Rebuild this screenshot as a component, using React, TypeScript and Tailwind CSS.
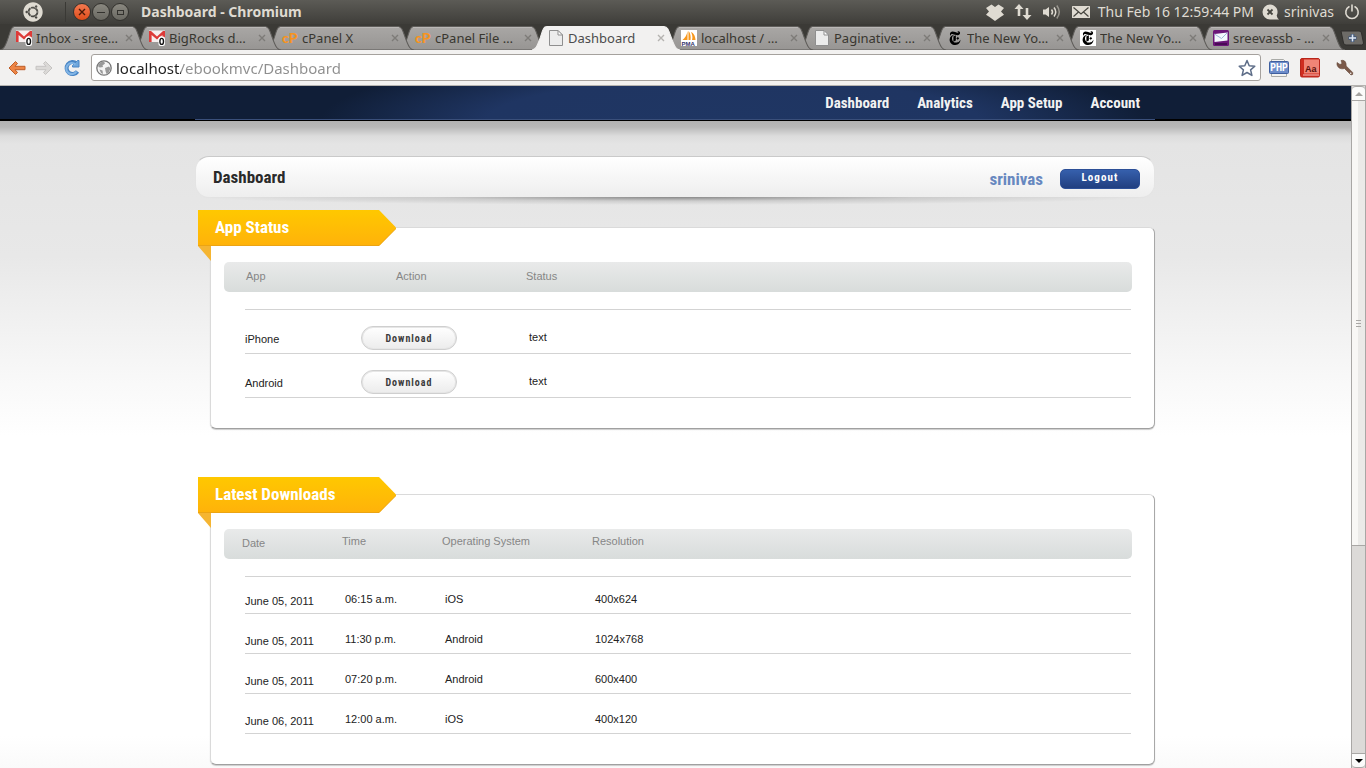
import type { ReactNode } from "react";
import { FaUbuntu } from "react-icons/fa";
import { SiNewyorktimes } from "react-icons/si";

const narrow = "font-['Liberation_Sans_Narrow','Roboto_Condensed','Liberation_Sans',sans-serif]";

function GmailIcon() {
  return (
    <svg viewBox="0 0 16 16" className="h-4 w-4 shrink-0" aria-hidden="true">
      <rect x="0" y="0.5" width="16" height="11.5" fill="#f6eeee" />
      <path d="M0 12V1h2l6 5.6L14 1h2v11h-2.6V5L8 9.6 2.6 5v7z" fill="#dd3a38" />
      <rect x="9.500" y="6.500" width="6.500" height="9.500" rx="2" fill="#fff" />
      <ellipse cx="12.700" cy="11.400" rx="1.800" ry="3" fill="none" stroke="#111" strokeWidth="1.400" />
    </svg>
  );
}

function CpanelIcon() {
  return (
    <span className="w-4 shrink-0 font-['Lato',sans-serif] text-sm leading-4 font-black text-[#f7941e]" aria-hidden="true">
      cP
    </span>
  );
}

function PageIcon() {
  return (
    <svg viewBox="0 0 16 16" className="h-4 w-4 shrink-0" aria-hidden="true">
      <path d="M1.500 0.500h8.500l4.500 4.500v10.500h-13z" fill="#ececec" stroke="#8f8f8f" />
      <path d="M10 0.500v4.500h4.500z" fill="#fff" stroke="#8f8f8f" />
    </svg>
  );
}

function PmaIcon() {
  return (
    <svg viewBox="0 0 16 16" className="h-4 w-4 shrink-0" aria-hidden="true">
      <rect width="16" height="16" fill="#fff" />
      <path d="M1.500 10C4 8 6 5 6.500 1v9zM7.500 10V1c2 2 2.500 6 2 9zM11 10c1-3 0-6-1-8 3 1 4.500 5 4.500 8z" fill="#f8981d" />
      <text x="0.500" y="15.500" fontSize="6" fontWeight="700" fill="#33346b" fontFamily="Liberation Sans, sans-serif">PMA</text>
    </svg>
  );
}

function TimesIcon({ boxed = false }: { boxed?: boolean }) {
  return (
    <span className={boxed ? "flex h-4 w-4 shrink-0 items-center justify-center bg-white text-black" : "flex h-4 w-4 shrink-0 items-center justify-center text-black"}>
      <SiNewyorktimes className="h-3.5 w-3.5" aria-hidden="true" />
    </span>
  );
}

function YahooMailIcon() {
  return (
    <svg viewBox="0 0 16 16" className="h-4 w-4 shrink-0" aria-hidden="true">
      <rect width="16" height="16" rx="1.500" fill="#6b1678" />
      <path d="M1.500 4l13-1.500v8l-13 1.500z" fill="#f4f8fd" />
      <path d="M1.500 4l7 4.500 6-6" fill="none" stroke="#9fb7d8" />
      <path d="M2 14h12" stroke="#3d0848" strokeWidth="1.500" />
    </svg>
  );
}

type TabData = { title: string; icon: ReactNode; active?: boolean; layer: string };

const tabs: TabData[] = [
  { title: "Inbox - sree…", icon: <GmailIcon />, layer: "z-[10]" },
  { title: "BigRocks d…", icon: <GmailIcon />, layer: "z-[9]" },
  { title: "cPanel X", icon: <CpanelIcon />, layer: "z-[8]" },
  { title: "cPanel File …", icon: <CpanelIcon />, layer: "z-[7]" },
  { title: "Dashboard", icon: <PageIcon />, active: true, layer: "z-[20]" },
  { title: "localhost / …", icon: <PmaIcon />, layer: "z-[6]" },
  { title: "Paginative: …", icon: <PageIcon />, layer: "z-[5]" },
  { title: "The New Yo…", icon: <TimesIcon />, layer: "z-[4]" },
  { title: "The New Yo…", icon: <TimesIcon boxed />, layer: "z-[3]" },
  { title: "sreevassb - …", icon: <YahooMailIcon />, layer: "z-[2]" },
];

function Tab({ tab }: { tab: TabData }) {
  return (
    <div className={`relative h-6 min-w-0 flex-1 ${tab.layer}`}>
      <svg
        viewBox="0 0 148 24"
        preserveAspectRatio="none"
        className="absolute top-0 -left-1.5 h-6 w-[calc(100%+16px)]"
        aria-hidden="true"
      >
        <defs>
          <linearGradient id="tabShade" x1="0" y1="0" x2="0" y2="1">
            <stop offset="0" stopColor="#a9a7a5" />
            <stop offset="1" stopColor="#979593" />
          </linearGradient>
        </defs>
        <path
          d="M0 24C4 23 5 20 7 15C9 10 10 5 11.500 2.500Q12.500 0.500 15 0.500H131Q133.500 0.500 135 3C137 7 138 11 140 16C142 21 143 23 147 24Z"
          fill={tab.active ? "#f2f1f0" : "url(#tabShade)"}
          stroke={tab.active ? "#f2f1f0" : "#5f5d5a"}
        />
        {!tab.active && <path d="M14 1.500H132" stroke="#bab8b6" />}
      </svg>
      <div className="relative flex h-6 items-center pr-1 pl-2.5">
        {tab.icon}
        <a
          href="#tab"
          className={`ml-1 min-w-0 flex-1 overflow-hidden text-[13px] leading-5 whitespace-nowrap ${tab.active ? "text-[#4c4c4c]" : "text-[#38362f]"}`}
        >
          {tab.title}
        </a>
        <button type="button" aria-label="Close tab" className="flex h-4 w-3 items-center justify-center">
          <svg viewBox="0 0 8 8" className="h-2 w-2" aria-hidden="true">
            <path d="M1 1l6 6M7 1L1 7" stroke={tab.active ? "#b5b3b0" : "#7d7b78"} strokeWidth="1.400" />
          </svg>
        </button>
      </div>
    </div>
  );
}

function SystemBar() {
  return (
    <header className="flex h-6 shrink-0 items-center bg-linear-to-b from-[#5c5b56] to-[#3f3e3a] pr-1.5 pl-[23px] text-[#dfdbd2]">
      <FaUbuntu className="h-5 w-5" aria-hidden="true" />
      <div className="ml-[22px] h-5 border-l border-[#3a3935]" />
      <div className="ml-[7px] flex gap-px">
        <button type="button" aria-label="Close" className="flex h-[18px] w-[18px] items-center justify-center rounded-full border border-[#33322e] bg-linear-to-b from-[#f4794f] to-[#df4c16]">
          <svg viewBox="0 0 8 8" className="h-2 w-2" aria-hidden="true"><path d="M1 1l6 6M7 1L1 7" stroke="#4a1a08" strokeWidth="1.400" /></svg>
        </button>
        <button type="button" aria-label="Minimize" className="flex h-[18px] w-[18px] items-center justify-center rounded-full border border-[#33322e] bg-linear-to-b from-[#8a8880] to-[#6a6962]">
          <span className="h-px w-2 bg-[#33322e]" />
        </button>
        <button type="button" aria-label="Maximize" className="flex h-[18px] w-[18px] items-center justify-center rounded-full border border-[#33322e] bg-linear-to-b from-[#8a8880] to-[#6a6962]">
          <span className="h-[5px] w-[7px] border border-[#33322e]" />
        </button>
      </div>
      <h1 className="ml-3 flex-1 text-sm leading-5 font-bold">Dashboard - Chromium</h1>
      <div className="flex items-center">
        <svg viewBox="0 0 18 17" className="h-[17px] w-[18px]" aria-hidden="true">
          <path d="M5.500 0.500L9 3l3.500-2.500L18 4l-3 3.500 3 3.200-3.500 2.200L9 17l-5.500-4.100L0 10.700l3-3.200L0 4z" fill="currentColor" />
        </svg>
        <svg viewBox="0 0 18 18" className="ml-2.5 h-[18px] w-[18px]" aria-hidden="true">
          <path d="M5 1l4.500 5H6.300v7H3.700V6H0.500zM13 17l-4.500-5h3.200V5h2.600v7h3.200z" fill="currentColor" />
        </svg>
        <svg viewBox="0 0 20 16" className="ml-2.5 h-4 w-5" fill="none" stroke="currentColor" aria-hidden="true">
          <path d="M1 5.500h2.500L7 3v10l-3.500-2.500H1z" fill="currentColor" stroke="none" />
          <path d="M9.500 5.500q2 2.500 0 5M12 3.500q3.500 4.500 0 9" strokeWidth="1.500" />
          <path d="M14.800 1.500q5 6.500 0 13" strokeWidth="1.500" opacity="0.500" />
        </svg>
        <svg viewBox="0 0 18 12" className="ml-2.5 h-3 w-[18px]" aria-hidden="true">
          <rect width="18" height="12" rx="0.500" fill="currentColor" />
          <path d="M1.500 1.500L9 8l7.500-6.500M1.500 10.500l5-4.500M16.500 10.500l-5-4.500" fill="none" stroke="#46453f" strokeWidth="1.200" />
        </svg>
        <time className="ml-2 text-[14px] leading-5">Thu Feb 16 12:59:44 PM</time>
        <svg viewBox="0 0 18 16" className="ml-2 h-4 w-[18px]" aria-hidden="true">
          <path d="M8 0.500a7.500 7.500 0 1 0 0 15h9q-2-1.500-2.300-4A7.500 7.500 0 0 0 8 0.500z" fill="currentColor" />
          <path d="M5.500 5.500l5 5M10.500 5.500l-5 5" stroke="#46453f" strokeWidth="1.800" />
        </svg>
        <span className="ml-1 text-[14px] leading-5">srinivas</span>
        <button type="button" aria-label="Power" className="ml-2.5">
          <svg viewBox="0 0 16 16" className="h-4 w-4" fill="none" stroke="currentColor" strokeWidth="1.600" strokeLinecap="round" aria-hidden="true">
            <path d="M8 1v6M5 2.800a6.200 6.200 0 1 0 6 0" />
          </svg>
        </button>
      </div>
    </header>
  );
}

function Toolbar() {
  return (
    <div className="flex h-9 shrink-0 items-center border-b border-[#b5b3b0] bg-[#f2f1f0] px-2">
      <button type="button" aria-label="Back">
        <svg viewBox="0 0 18 16" className="h-4 w-[18px]" aria-hidden="true">
          <path d="M1 8L7.500 1.500 9.500 3.500 7 6.300h10v3.400H7l2.500 2.800-2 2z" fill="#ee8545" stroke="#bd5e29" strokeLinejoin="round" />
        </svg>
      </button>
      <button type="button" aria-label="Forward" className="ml-[9px]">
        <svg viewBox="0 0 18 16" className="h-4 w-[18px]" aria-hidden="true">
          <path d="M17 8l-6.500-6.500-2 2L11 6.300H1v3.400h10l-2.500 2.800 2 2z" fill="#dbd9d7" stroke="#c6c4c2" strokeLinejoin="round" />
        </svg>
      </button>
      <button type="button" aria-label="Reload" className="ml-2.5">
        <svg viewBox="0 0 18 18" className="h-[18px] w-[18px]" fill="none" aria-hidden="true">
          <path d="M14.500 12.500a6 6 0 1 1-1-8" stroke="#4a86c5" strokeWidth="4" />
          <path d="M9.500 8V6.500L14.500 1.500H16V8z" fill="#6ea6dc" stroke="#4a86c5" />
          <path d="M13.500 12.500a5.500 5.500 0 1 1-1-7" stroke="#82b5e5" strokeWidth="2" />
        </svg>
      </button>
      <div className="ml-2.5 flex h-[27px] min-w-0 flex-1 items-center rounded-[3px] border border-[#a5a19d] bg-white px-1">
        <svg viewBox="0 0 16 16" className="h-4 w-4 shrink-0" aria-hidden="true">
          <circle cx="8" cy="8" r="7.200" fill="#f4f4f4" stroke="#777" strokeWidth="1.300" />
          <path d="M2 4.500Q4.500 1.500 8 1.500L9 3.500 6.500 5.500 7 7 4 7.500 2.500 7zM9 8l4-1.500 1.500 2-2 4.500-2 1-1-3zM3.500 9.500l3 1 0.500 3.500-2-1z" fill="#999" />
        </svg>
        <input
          aria-label="Address"
          defaultValue="localhost/ebookmvc/Dashboard"
          className="ml-1 h-6 min-w-0 flex-1 bg-linear-to-r from-[#222] from-[65px] to-[#8e8e8e] to-[65px] bg-clip-text text-[15px] leading-6 text-transparent outline-none"
        />
        <button type="button" aria-label="Bookmark this page">
          <svg viewBox="0 0 18 18" className="h-[18px] w-[18px]" aria-hidden="true">
            <path d="M9 1.500l2.200 5.200 5.600.5-4.200 3.700 1.300 5.500L9 13.500l-4.900 2.900 1.300-5.500L1.200 7.200l5.600-.5z" fill="#fff" stroke="#5d6d88" strokeWidth="1.500" strokeLinejoin="round" />
          </svg>
        </button>
      </div>
      <button type="button" aria-label="PHP" className="ml-2">
        <svg viewBox="0 0 20 20" className="h-5 w-5" aria-hidden="true">
          <path d="M2.500 1.500h12l3 3v14h-15z" fill="#f2f2f0" stroke="#a9aaa7" />
          <rect x="0.500" y="3.500" width="19" height="12" rx="1" fill="#6c8cc9" stroke="#3f5f9f" />
          <text x="10" y="13" textAnchor="middle" fontSize="10" fontWeight="700" fill="#fff" fontFamily="Roboto Condensed, Liberation Sans, sans-serif">PHP</text>
        </svg>
      </button>
      <button type="button" aria-label="Dictionary" className="ml-[11px]">
        <svg viewBox="0 0 20 20" className="h-5 w-5" aria-hidden="true">
          <rect x="0.500" y="0.500" width="19" height="18.500" rx="1.500" fill="#cf2d20" stroke="#b8251a" />
          <rect x="4" y="1.500" width="15" height="14" fill="#f08576" />
          <path d="M3 17h16" stroke="#f7c6c0" />
          <text x="5" y="14" fontSize="9" fontWeight="700" fill="#5a0f0a" fontFamily="Liberation Sans, sans-serif">Aa</text>
        </svg>
      </button>
      <button type="button" aria-label="Customize" className="mr-1 ml-4">
        <svg viewBox="0 0 18 18" className="h-[18px] w-[18px]" aria-hidden="true">
          <path d="M1 3.500l3 2L6 4.500 5 1.500Q9 0.500 10 4.500L10.200 7l6.500 6.500q.8 2.500-1.700 2.500L8.500 9.500Q3 11 1 6z" fill="#7b5a4a" stroke="#68493b" strokeWidth="0.600" />
          <circle cx="14.700" cy="14.200" r="0.800" fill="#f2f1f0" />
        </svg>
      </button>
    </div>
  );
}

function Nav() {
  return (
    <nav className="bg-linear-to-b from-[#101e37] from-[33px] to-black to-[33px] pr-px pb-px">
      <div className="mx-auto flex h-[34px] max-w-[960px] items-center justify-end gap-7 border-b border-[#3a4f7a] bg-[radial-gradient(ellipse_43%_220%_at_56%_110%,#1f3663_0%,#1f3562_60%,#101e37_100%)] px-[15px]">
        {["Dashboard", "Analytics", "App Setup", "Account"].map((item) => (
          <a key={item} href={`#${item}`} className={`text-[15px] leading-5 font-bold text-[#f2f2f2] ${narrow}`}>
            {item}
          </a>
        ))}
      </div>
    </nav>
  );
}

function Panel({ title, children }: { title: string; children: ReactNode }) {
  return (
    <section className="ml-[3px]">
      <div className="relative z-10 h-[51px] w-[198px]">
        <svg viewBox="0 0 198 51" className="absolute inset-0 h-full w-full" aria-hidden="true">
          <defs>
            <linearGradient id="ribbon" x1="0" y1="0" x2="0" y2="1">
              <stop offset="0" stopColor="#ffc800" />
              <stop offset="1" stopColor="#ffb20a" />
            </linearGradient>
          </defs>
          <path d="M0 36h13v15z" fill="#f5b532" />
          <path d="M0 0h181l17.500 18L181 36H0z" fill="url(#ribbon)" />
          <path d="M0 35.500h181l17-17" fill="none" stroke="#eba414" />
        </svg>
        <h2 className={`relative pl-[17px] text-[17px] leading-[34px] font-bold text-white ${narrow}`}>{title}</h2>
      </div>
      <div className="-mt-[34px] ml-3 rounded-md border border-[#dadada] border-r-[#a8a8a8] border-b-[#a0a0a0] bg-white pt-[34px] pr-[22px] pl-[13px] shadow-[0_1px_1px_#ccc]">
        {children}
      </div>
    </section>
  );
}

const headRow = "block rounded-[5px] bg-linear-to-b from-[#e9eaea] to-[#d8dcdb] text-[#868686]";
const body = "mt-[17px] mr-px ml-[21px] block border-t border-[#d3d3d3] text-[#222]";

const builds = [
  { app: "iPhone", status: "text" },
  { app: "Android", status: "text" },
];

const downloads = [
  { date: "June 05, 2011", time: "06:15 a.m.", os: "iOS", size: "400x624" },
  { date: "June 05, 2011", time: "11:30 p.m.", os: "Android", size: "1024x768" },
  { date: "June 05, 2011", time: "07:20 p.m.", os: "Android", size: "600x400" },
  { date: "June 06, 2011", time: "12:00 a.m.", os: "iOS", size: "400x120" },
];

function StatusTable() {
  return (
    <table className="block pb-[30px] text-left text-[11px] leading-4">
      <thead className={headRow}>
        <tr className="flex h-[30px] pt-1.5 pl-[22px]">
          <th className="w-[150px] font-normal">App</th>
          <th className="w-[130px] font-normal">Action</th>
          <th className="font-normal">Status</th>
        </tr>
      </thead>
      <tbody className={body}>
        {builds.map((b) => (
          <tr key={b.app} className="flex h-11 items-end border-b border-[#d3d3d3]">
            <td className="w-[116px] pb-1.5">{b.app}</td>
            <td className="w-[168px] pb-[3px]">
              <button
                type="button"
                className={`block h-6 w-24 rounded-full border border-[#cfcfcf] bg-linear-to-b from-white to-[#ececec] pt-px text-[10px] leading-4 font-bold tracking-widest text-[#3c3c3c] inset-ring inset-ring-[#e6e6e6] ${narrow}`}
              >
                Download
              </button>
            </td>
            <td className="pb-2">{b.status}</td>
          </tr>
        ))}
      </tbody>
    </table>
  );
}

function DownloadsTable() {
  return (
    <table className="block pb-[30px] text-left text-[11px] leading-4">
      <thead className={headRow}>
        <tr className="flex h-[30px] pt-1 pl-[18px]">
          <th className="w-[100px] pt-0.5 font-normal">Date</th>
          <th className="w-[100px] font-normal">Time</th>
          <th className="w-[150px] font-normal">Operating System</th>
          <th className="font-normal">Resolution</th>
        </tr>
      </thead>
      <tbody className={body}>
        {downloads.map((d) => (
          <tr key={d.time} className="flex h-10 items-end border-b border-[#d3d3d3] first:h-[37px]">
            <td className="w-[100px] pb-1">{d.date}</td>
            <td className="w-[100px] pb-1.5">{d.time}</td>
            <td className="w-[150px] pb-1.5">{d.os}</td>
            <td className="pb-1.5">{d.size}</td>
          </tr>
        ))}
      </tbody>
    </table>
  );
}

function ScrollBar() {
  return (
    <div className="flex w-[15px] shrink-0 flex-col border-x border-[#a9a7a5] bg-[#dcdad8]" aria-hidden="true">
      <div className="flex h-[15px] items-center justify-center rounded-t border-y border-[#a9a7a5] bg-[#fbfbfa]">
        <svg viewBox="0 0 8 4" className="h-1 w-2"><path d="M0 4l4-4 4 4z" fill="#a5a3a0" /></svg>
      </div>
      <div className="flex flex-[445_1_0%] flex-col items-center justify-center gap-0.5 border-b border-[#a9a7a5] bg-linear-to-r from-[#f8f7f5] from-50% to-[#ebeae8] to-50%">
        <span className="h-px w-[5px] bg-[#a9a7a5]" />
        <span className="h-px w-[5px] bg-[#a9a7a5]" />
        <span className="h-px w-[5px] bg-[#a9a7a5]" />
      </div>
      <div className="flex-[207_1_0%]" />
      <div className="flex h-[15px] items-center justify-center rounded-b border-y border-[#a9a7a5] bg-[#fbfbfa]">
        <svg viewBox="0 0 8 4" className="h-1 w-2"><path d="M0 0l4 4 4-4z" fill="#000" /></svg>
      </div>
    </div>
  );
}

export default function App() {
  return (
    <div className="flex h-screen flex-col overflow-hidden bg-white font-['Noto_Sans','Open_Sans',sans-serif]">
      <SystemBar />
      <div className="flex h-[26px] shrink-0 items-end bg-[#3b3a36] pr-0.5 pl-1.5">
        <div className="flex min-w-0 flex-1 pr-1">
          {tabs.map((tab, i) => (
            <Tab key={i} tab={tab} />
          ))}
        </div>
        <button type="button" aria-label="New tab" className="mb-1 h-4">
          <svg viewBox="0 0 24 16" className="h-4 w-6" aria-hidden="true">
            <path d="M1 1h18q2 0 2.500 2l2 10q0 2-2 2H6q-2 0-2.500-2z" fill="#6d6b67" stroke="#2e2d2a" />
            <path d="M12.500 4v8M8.500 8h8" stroke="#3d5478" strokeWidth="3.600" />
            <path d="M12.500 4.500v7M9 8h7" stroke="#dfe7f2" strokeWidth="1.600" />
          </svg>
        </button>
      </div>
      <Toolbar />
      <div className="flex min-h-0 flex-1">
        <main className="min-w-0 flex-1 overflow-hidden bg-[linear-gradient(#0000_650px,#fafafa),linear-gradient(#b2b2b2_35px,#b8b8b8_41px,#dcdcdc_50px,#e4e4e4_58px,#e8e8e8_170px,#f8f8f8_290px,#fff_350px)] font-['Liberation_Sans',Arial,sans-serif]">
          <Nav />
          <div className="pt-[35px] pr-px">
            <div className="mx-auto max-w-[960px]">
              <div className="relative mb-3 flex h-[42px] items-center rounded-[14px] border border-[#e4e4e4] border-t-[#cacaca] bg-linear-to-b from-white to-[#eee] pr-3.5 pl-[17px]">
                <h2 className={`flex-1 text-[17px] leading-6 font-bold text-[#2a2a2a] ${narrow}`}>Dashboard</h2>
                <div className="flex items-center gap-[17px] pt-1">
                  <a href="#profile" className={`text-[17px] leading-6 font-bold text-[#6788c0] ${narrow}`}>srinivas</a>
                  <button
                    type="button"
                    className={`h-5 w-20 rounded-[5px] border border-[#2c4f97] bg-linear-to-b from-[#3660ad] to-[#213f80] pb-0.5 text-[11px] leading-4 font-bold tracking-widest text-white ${narrow}`}
                  >
                    Logout
                  </button>
                </div>
                <div className="absolute top-10 right-0 left-0 h-2 bg-[radial-gradient(ellipse_50%_100%_at_50%_0,#888_0,#8884_50%,#8880_100%)]" />
              </div>
              <div className="flex flex-col gap-12">
                <Panel title="App Status">
                  <StatusTable />
                </Panel>
                <Panel title="Latest Downloads">
                  <DownloadsTable />
                </Panel>
              </div>
            </div>
          </div>
        </main>
        <ScrollBar />
      </div>
    </div>
  );
}
